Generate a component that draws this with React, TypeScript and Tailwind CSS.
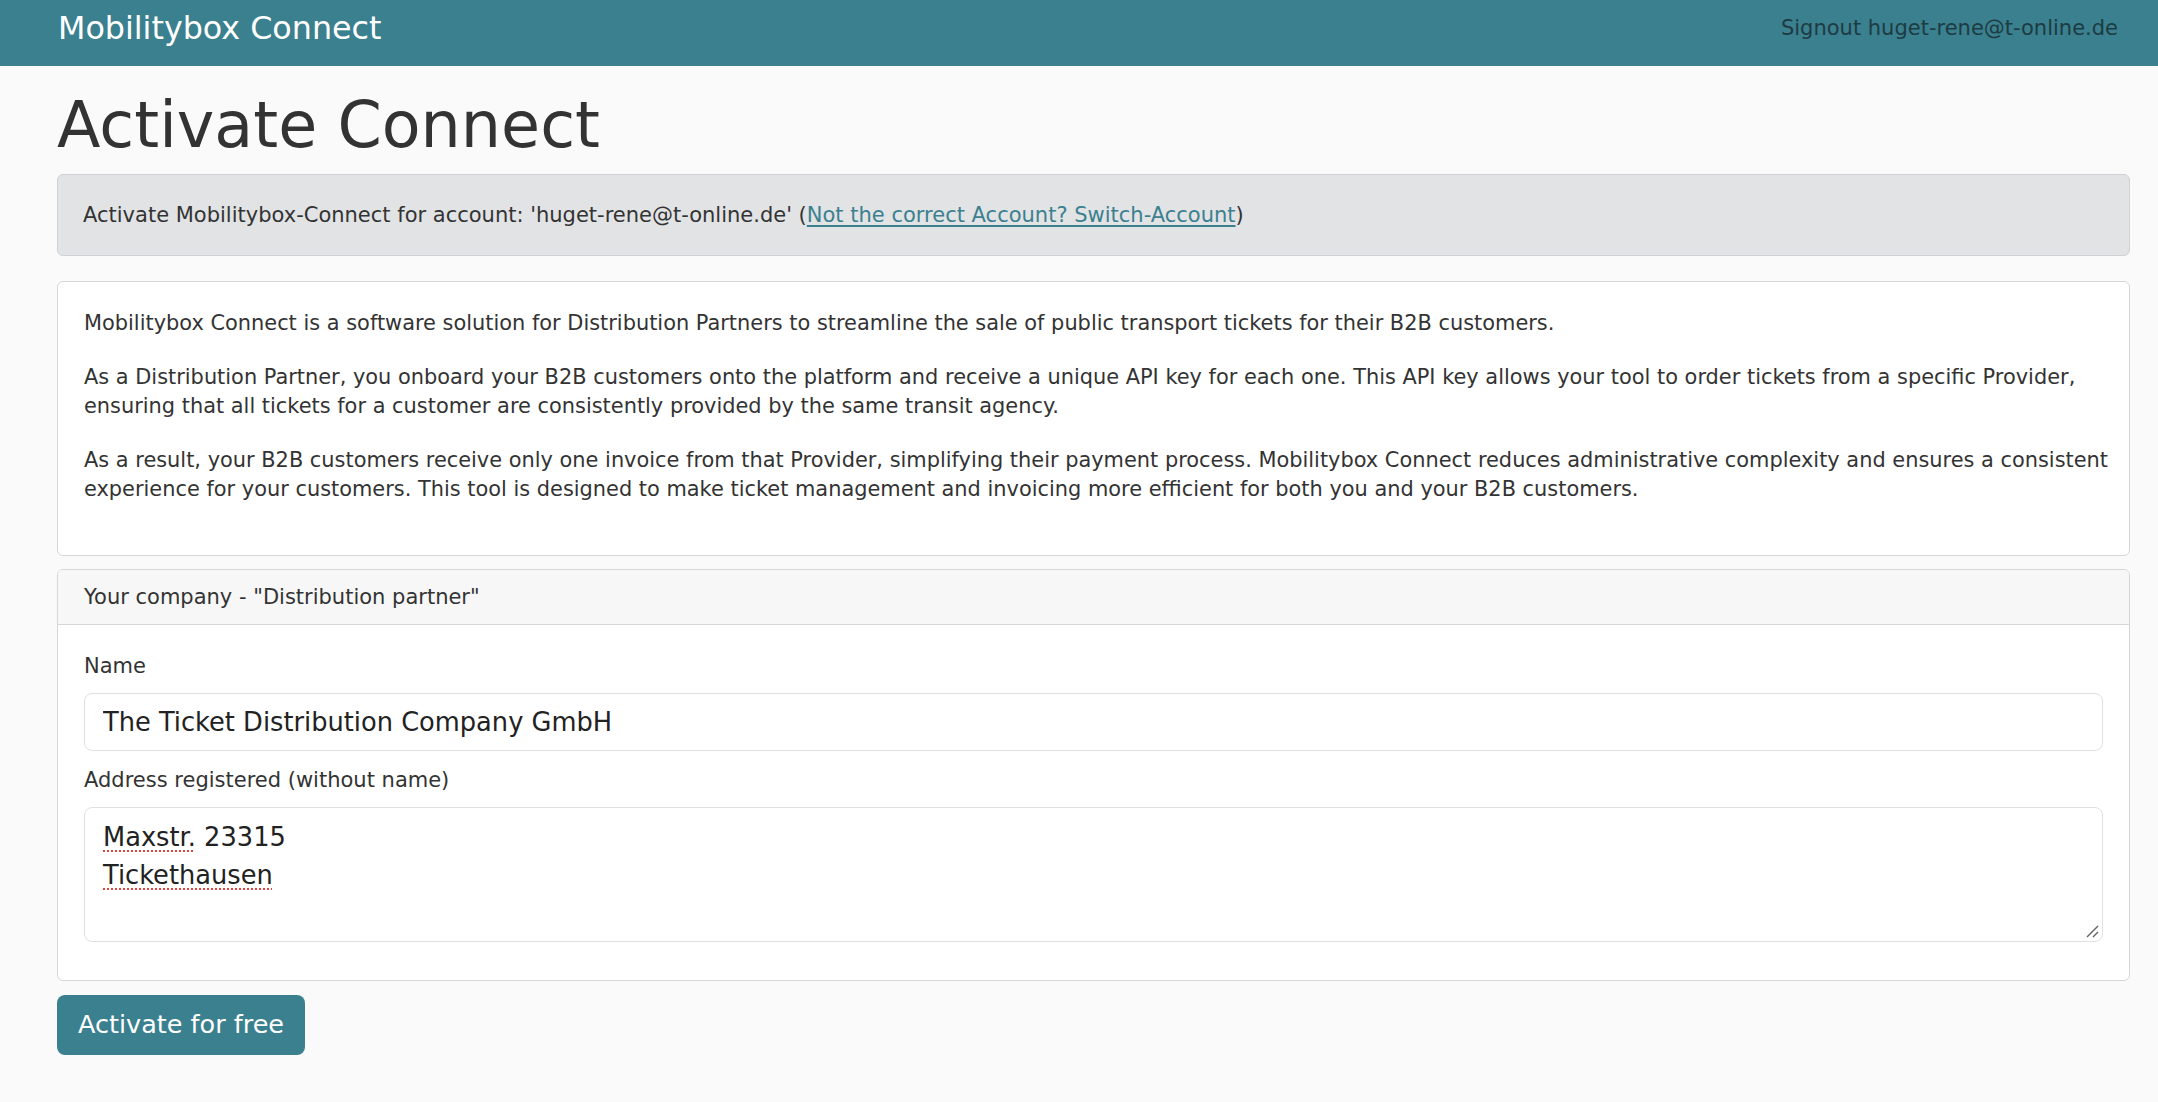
import React from "react";

const font = { fontFamily: '"DejaVu Sans", "Liberation Sans", sans-serif' };

function Navbar() {
  return (
    <header className="h-[66px] bg-[#3b808f] flex items-center justify-between pl-[58px] pr-[40px] pb-[9px]">
      <a href="#" className="text-white text-[31.75px] leading-none">
        Mobilitybox Connect
      </a>
      <a href="#" className="text-[#1d3b42] text-[21px] leading-none">
        Signout huget-rene@t-online.de
      </a>
    </header>
  );
}

function ResizeGrip() {
  return (
    <svg
      className="absolute right-[3px] bottom-[3px]"
      width="14"
      height="14"
      viewBox="0 0 14 14"
    >
      <path d="M13 2 L2 13" stroke="#666" strokeWidth="1.4" />
      <path d="M13 8 L8 13" stroke="#666" strokeWidth="1.4" />
    </svg>
  );
}

export default function App() {
  return (
    <div style={font} className="min-h-screen bg-[#fafafa] text-[#333] text-[21px]">
      <Navbar />

      <main className="pl-[57px] pr-[28px] pb-10">
        <h1 className="text-[63.5px] leading-[77px] mt-[21px] mb-[10px] font-normal">
          Activate Connect
        </h1>

        {/* account notice */}
        <div className="bg-[#e2e3e5] border border-[#cfd1d4] rounded-[6px] px-[25px] py-[25px] leading-[30px]">
          Activate Mobilitybox-Connect for account: 'huget-rene@t-online.de' (
          <a href="#" className="text-[#3b808f] underline underline-offset-[3px]">
            Not the correct Account? Switch-Account
          </a>
          )
        </div>

        {/* intro card */}
        <section className="mt-[25px] bg-white border border-[#d6d6d6] rounded-[6px] pl-[26px] pr-[20px] pt-[27px] pb-[26px] text-[20.9px] leading-[29.5px]">
          <p className="mb-[24px]">
            Mobilitybox Connect is a software solution for Distribution Partners to streamline the sale of
            public transport tickets for their B2B customers.
          </p>
          <p className="mb-[24px]">
            As a Distribution Partner, you onboard your B2B customers onto the platform and receive a unique API
            key for each one. This API key allows your tool to order tickets from a specific Provider, ensuring
            that all tickets for a customer are consistently provided by the same transit agency.
          </p>
          <p className="mb-[24px]">
            As a result, your B2B customers receive only one invoice from that Provider, simplifying their
            payment process. Mobilitybox Connect reduces administrative complexity and ensures a consistent
            experience for your customers. This tool is designed to make ticket management and invoicing more
            efficient for both you and your B2B customers.
          </p>
        </section>

        {/* company form */}
        <section className="mt-[13px] bg-white border border-[#d6d6d6] rounded-[6px] overflow-hidden">
          <div className="bg-[#f7f7f7] border-b border-[#d6d6d6] px-[26px] py-[12px] leading-[30px]">
            Your company - "Distribution partner"
          </div>
          <div className="px-[26px] pt-[26px] pb-[38px] leading-[30px]">
            <label className="block mb-[12px]">Name</label>
            <input
              type="text"
              defaultValue="The Ticket Distribution Company GmbH"
              className="block w-full h-[58px] border border-[#e0e0e3] rounded-[8px] bg-white px-[18px] text-[25.7px] text-[#222] outline-none"
            />
            <label className="block mt-[14px] mb-[12px]">Address registered (without name)</label>
            <div className="relative h-[135px] border border-[#e0e0e3] rounded-[8px] bg-white px-[18px] pt-[10px] text-[25.7px] leading-[38px] text-[#222]">
              <div>
                <span className="underline decoration-dotted decoration-[#e0443e] decoration-2 underline-offset-[5px]">
                  Maxstr.
                </span>{" "}
                23315
              </div>
              <div>
                <span className="underline decoration-dotted decoration-[#e0443e] decoration-2 underline-offset-[5px]">
                  Tickethausen
                </span>
              </div>
              <ResizeGrip />
            </div>
          </div>
        </section>

        <button className="mt-[14px] h-[60px] w-[248px] bg-[#3b808f] text-white text-[25.5px] rounded-[8px]">
          Activate for free
        </button>
      </main>
    </div>
  );
}
